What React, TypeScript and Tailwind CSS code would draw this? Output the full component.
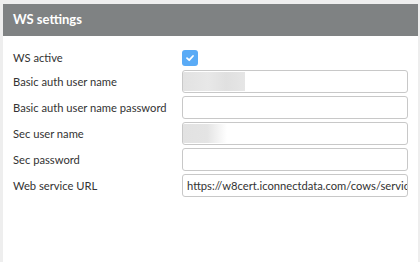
import React from "react";

const font = { fontFamily: 'Lato, "Liberation Sans", sans-serif' };

function Row({ label, children }: { label: string; children: React.ReactNode }) {
  return (
    <div className="flex h-[23px] items-center">
      <div className="w-[169px] whitespace-nowrap pt-[2px] text-[11.2px] text-[#333]">{label}</div>
      {children}
    </div>
  );
}

function Input({ value, blur }: { value?: string; blur?: "a" | "b" }) {
  return (
    <div className="relative h-[23px] w-[226px] overflow-hidden whitespace-nowrap rounded-[3px] border border-[#c8c8c8] bg-white px-[4px] text-[11.2px] leading-[21px] text-[#333]">
      {blur === "a" ? (
        <div className="absolute left-0 top-[1px] bottom-[1px] w-[62px] bg-[linear-gradient(90deg,#e2e2e2,#e8e8e8_40%,#e0e0e0_70%,#e6e6e6)]" />
      ) : null}
      {blur === "b" ? (
        <div className="absolute left-0 top-[1px] bottom-[1px] w-[44px] bg-[linear-gradient(90deg,#e2e2e2,#e4e4e4_55%,#ffffff)]" />
      ) : null}
      {value}
    </div>
  );
}

export default function App() {
  return (
    <div className="h-[262px] w-[420px] bg-[#eeeeee] pl-[3px] pr-[2px] pt-[4px]" style={font}>
      <div className="h-full w-[415px] bg-white">
        <div className="flex h-[32px] items-center bg-[#7f8283] pl-[10px] text-[13px] font-bold text-white">
          WS settings
        </div>
        <div className="flex flex-col gap-[3px] px-[10px] pt-[14px]">
          <div className="mb-[1px] flex h-[16px] items-center">
            <div className="w-[169px] pt-[1px] text-[11.2px] text-[#333]">WS active</div>
            <div className="flex h-[16px] w-[16px] items-center justify-center rounded-[3px] bg-[#5aabf6]">
              <svg width="10" height="10" viewBox="0 0 10 10">
                <path d="M2 5.2 L4.2 7.2 L8 3" stroke="white" strokeWidth="1.8" fill="none" strokeLinecap="round" strokeLinejoin="round" />
              </svg>
            </div>
          </div>
          <Row label="Basic auth user name">
            <Input blur="a" />
          </Row>
          <Row label="Basic auth user name password">
            <Input />
          </Row>
          <Row label="Sec user name">
            <Input blur="b" />
          </Row>
          <Row label="Sec password">
            <Input />
          </Row>
          <Row label="Web service URL">
            <Input value="https://w8cert.iconnectdata.com/cows/servic" />
          </Row>
        </div>
      </div>
    </div>
  );
}
